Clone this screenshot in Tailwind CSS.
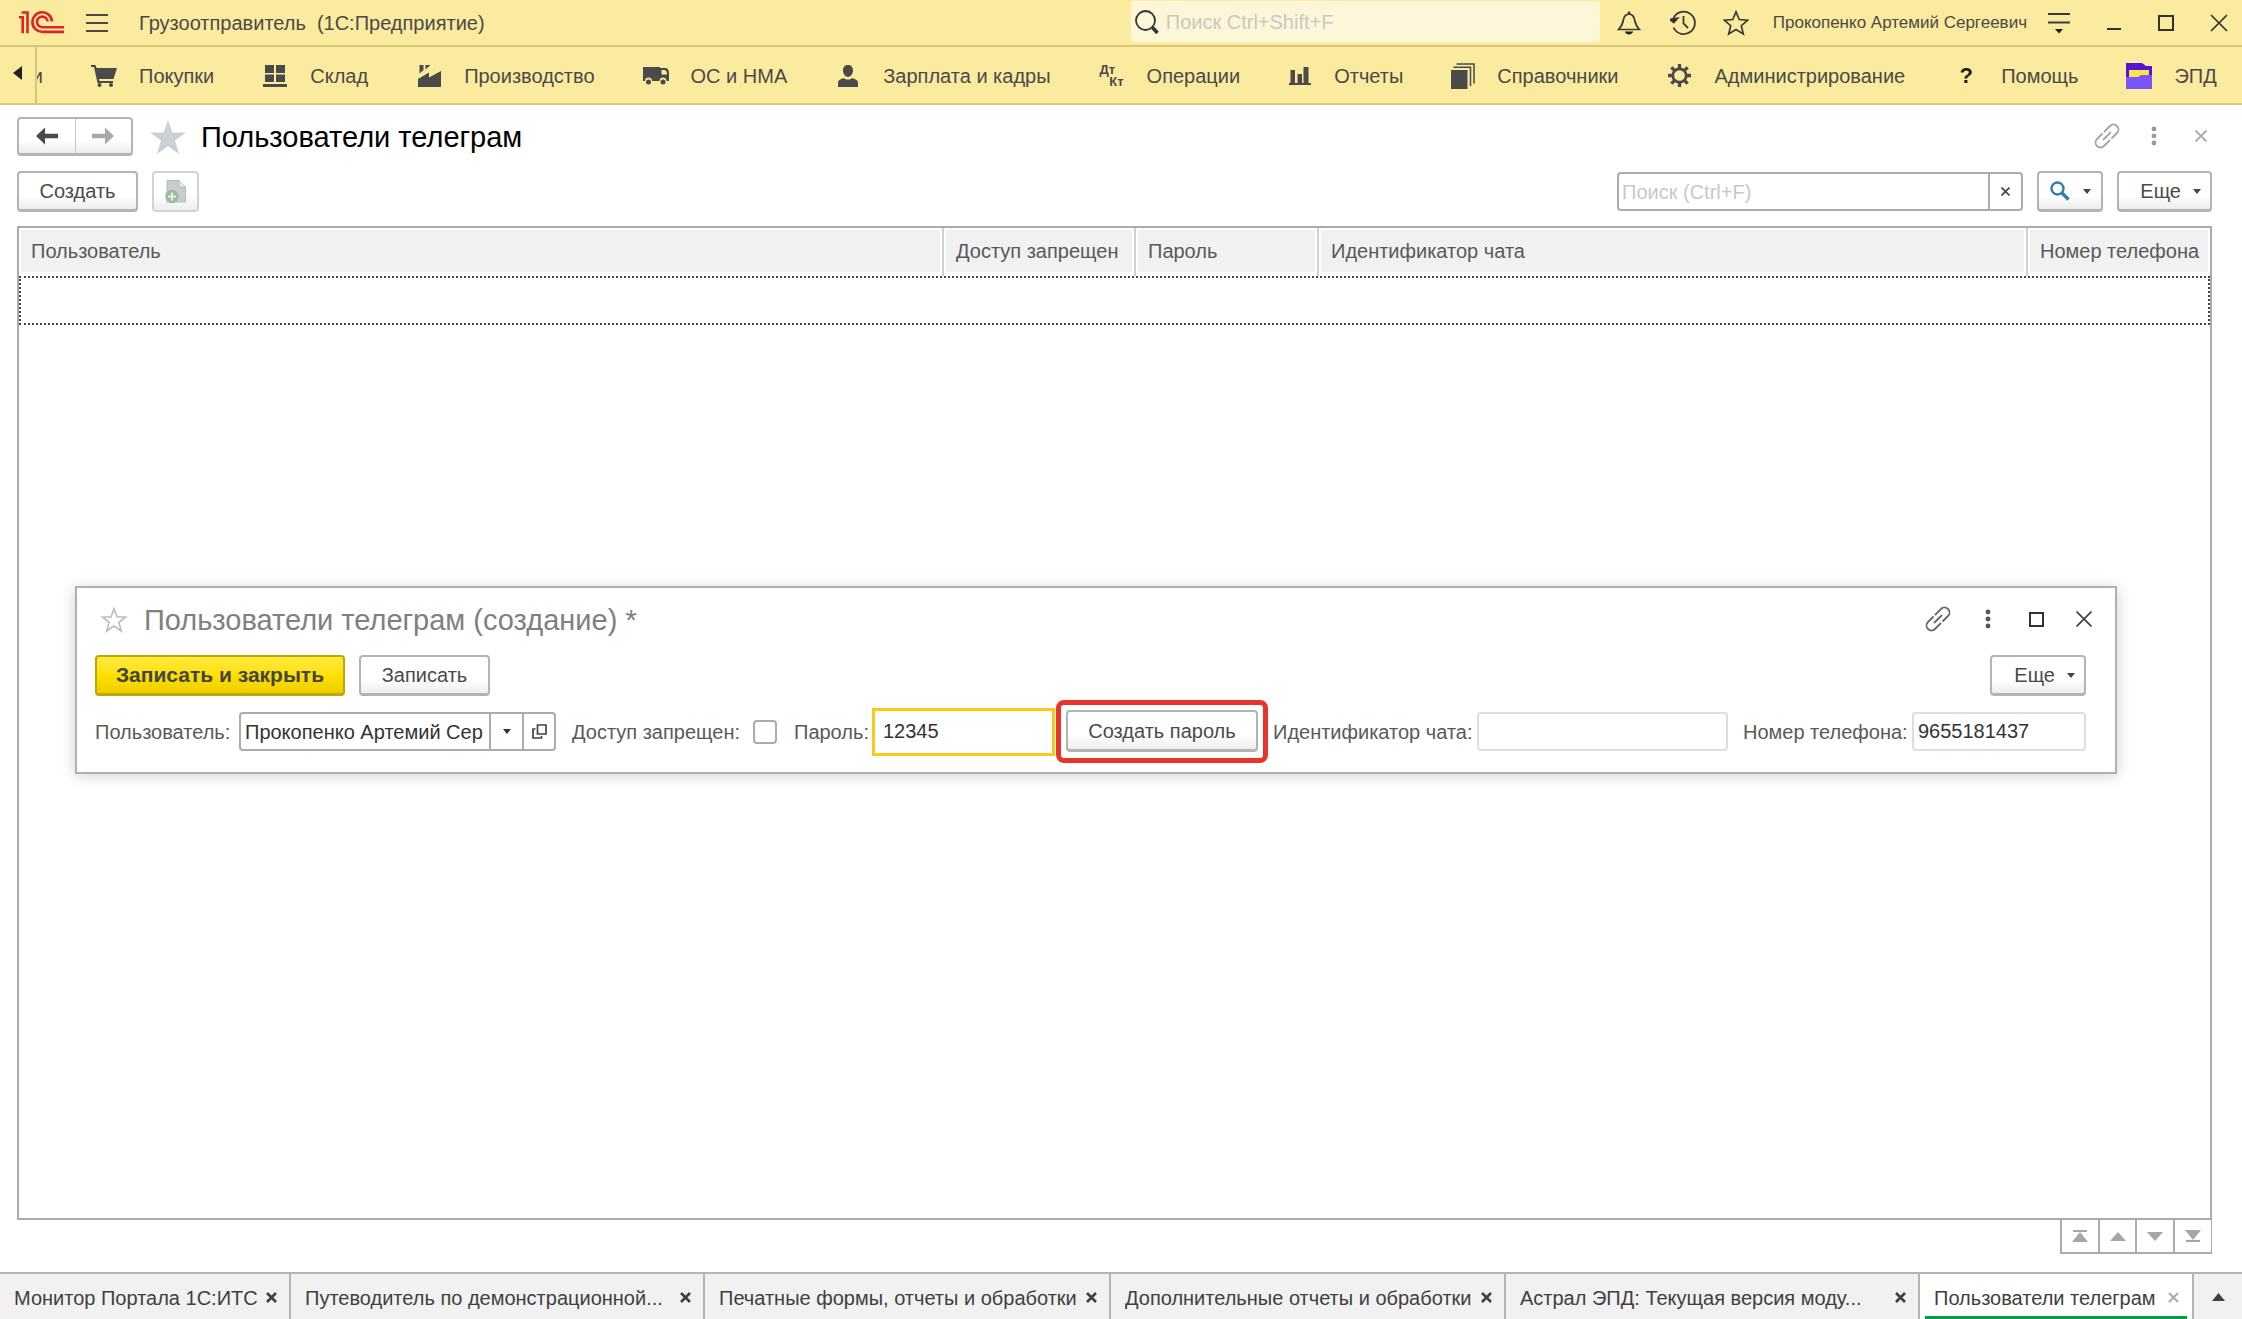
<!DOCTYPE html>
<html lang="ru">
<head>
<meta charset="utf-8">
<meta name="viewport" content="width=device-width, initial-scale=1">
<title>Пользователи телеграм</title>
<script src="https://cdn.jsdelivr.net/npm/@tailwindcss/browser@4"></script>
</head>
<body class="flex min-h-screen flex-col overflow-x-hidden bg-white font-['Liberation_Sans',Arial,sans-serif] text-[20px] leading-6 text-[#4a4a4a]">

<!-- Title bar -->
<header class="flex h-[47px] items-center border-b-2 border-[#d6c77c] bg-[#fbeb9e] pr-[14px] pl-[18px]">
  <svg class="h-[23px] w-[46px] shrink-0" viewBox="0 0 46 23" fill="none" stroke="#de2329" stroke-width="2.6" aria-label="1С">
    <path d="M1 6.200H4.700V22.300M3.600 1.500H9.500V22.300"/>
    <path d="M46 20.900H24.300A9.800 9.800 0 1 1 34 10.500"/>
    <path d="M46 16.200H24.500A5.300 5.300 0 1 1 29.600 10.500"/>
  </svg>
  <button class="ml-[22px] flex h-8 w-[22px] shrink-0 items-center" aria-label="Главное меню">
    <svg class="h-[18px] w-[22px]" viewBox="0 0 22 18" stroke="#4a4a4a" stroke-width="2"><path d="M0 1H22M0 9H22M0 17H22"/></svg>
  </button>
  <h1 class="ml-[31px] flex gap-[11px] whitespace-nowrap"><span>Грузоотправитель</span><span>(1С:Предприятие)</span></h1>
  <label class="mt-px ml-auto flex h-[41px] w-[469px] items-center gap-[7px] self-start rounded-sm bg-[#fef6d8] pl-1">
    <svg class="h-6 w-[24px] shrink-0" viewBox="0 0 24 24" fill="none" stroke="#333"><circle cx="10.5" cy="10.5" r="9.5" stroke-width="1.8"/><path d="M17.5 17.5L22.5 23" stroke-width="3.6"/></svg>
    <input type="text" class="min-w-0 flex-1 bg-transparent outline-none placeholder:text-[#cbc7c3]" placeholder="Поиск Ctrl+Shift+F" aria-label="Глобальный поиск">
  </label>
  <div class="flex shrink-0 items-center">
    <button class="ml-[17px]" aria-label="Уведомления"><svg class="h-6 w-6" viewBox="0 0 24 24" fill="none" stroke="#3a3a3a" stroke-width="1.7"><path d="M1.5 18.5H22.5C19.5 15.5 18.5 14 17.8 9.5C17 5 15.5 3.2 12 3.2S7 5 6.2 9.5C5.5 14 4.500 15.500 1.500 18.500Z"/><path d="M12 0.500V3" stroke-width="2.400"/><path d="M7.800 20.500H16.200C15.500 22.500 14 23.500 12 23.500S8.500 22.500 7.800 20.500Z" fill="#222" stroke="none"/></svg></button>
    <button class="ml-[29px]" aria-label="История"><svg class="h-[26px] w-[26px]" viewBox="0 0 26 26" fill="none" stroke="#3a3a3a" stroke-width="1.8"><path d="M3.200 9A11.200 11.200 0 1 1 3.500 17.500"/><path d="M13.500 6V13.500L18 18"/><path d="M0 9.500L7.500 8.300L3.800 12.500Z" fill="#222"/></svg></button>
    <button class="ml-[27px]" aria-label="Избранное"><svg class="h-[26px] w-[26px]" viewBox="0 0 26 26" fill="none" stroke="#3a3a3a" stroke-width="1.700"><path d="M13 1.800L16.300 9.500L24.700 10.200L18.300 15.700L20.300 24L13 19.600L5.700 24L7.700 15.700L1.300 10.200L9.700 9.500Z"/></svg></button>
    <a href="#" class="ml-6 text-[17px] whitespace-nowrap">Прокопенко Артемий Сергеевич</a>
    <button class="ml-[20px]" aria-label="Настройки"><svg class="h-[22px] w-[24px]" viewBox="0 0 24 22" stroke="#3a3a3a" stroke-width="2"><path d="M1 2H23M1 10.500H23"/><path d="M8 17H16L12 21.500Z" fill="#222" stroke="none"/></svg></button>
    <button class="ml-[35px]" aria-label="Свернуть"><svg class="h-4 w-4" viewBox="0 0 16 16" stroke="#333" stroke-width="2"><path d="M1 14H15"/></svg></button>
    <button class="ml-[36px]" aria-label="Развернуть"><svg class="h-4 w-4" viewBox="0 0 16 16" fill="none" stroke="#333" stroke-width="2"><path d="M1 1H15V15H1Z"/></svg></button>
    <button class="ml-[36px]" aria-label="Закрыть"><svg class="h-[18px] w-[18px]" viewBox="0 0 18 18" stroke="#333" stroke-width="1.700"><path d="M1 1L17 17M17 1L1 17"/></svg></button>
  </div>
</header>

<!-- Sections -->
<nav class="flex h-[58px] items-stretch overflow-hidden border-b-2 border-[#d6c77c] bg-[#fbeb9e] whitespace-nowrap">
  <button class="flex w-[37px] shrink-0 items-center justify-center border-r-2 border-[#d6c77c] pb-1" aria-label="Назад"><svg class="mr-px h-[14px] w-[9px]" viewBox="0 0 9 14" fill="#222"><path d="M9 0V14L0 7Z"/></svg></button>
  <div class="flex w-[6px] shrink-0 items-center justify-end overflow-hidden pt-px"><span>и</span></div>
  <div class="ml-[45px] flex items-center gap-[45px] pt-px">
    <a href="#" class="flex items-center gap-[19px]"><span class="flex w-8 justify-center"><svg class="h-[22px] w-[26px]" viewBox="0 0 26 22" fill="#4a4a4a"><path d="M0 0H4.500L5.500 3H26L22.500 14H8L8.500 16H22V18H6.500L3 2H0Z"/><circle cx="8.500" cy="20" r="2"/><circle cx="20" cy="20" r="2"/></svg></span>Покупки</a>
    <a href="#" class="flex items-center gap-[19px]"><span class="flex w-8 justify-center"><svg class="h-[22px] w-6" viewBox="0 0 24 22" fill="#4a4a4a"><path d="M2 0H11V8H2ZM13 0H22V8H13ZM2 9.500H11V17H2ZM13 9.500H22V17H13ZM0 19H24V22H0Z"/></svg></span>Склад</a>
    <a href="#" class="flex items-center gap-[19px]"><span class="flex w-8 justify-center"><svg class="h-[22px] w-[23px]" viewBox="0 0 23 22" fill="#4a4a4a"><path d="M0 22V14L11 7.500V12.500L23 6V22ZM1.500 0H5.500V5L1.500 8.500ZM7.500 0H12.500L7.500 4.500Z"/></svg></span>Производство</a>
    <a href="#" class="flex items-center gap-[19px]"><span class="flex w-8 justify-center"><svg class="h-[18px] w-[26px]" viewBox="0 0 26 18" fill="#4a4a4a"><path fill-rule="evenodd" d="M0 0H17V1H22Q26 1 26 6V14H23.500A3.500 3.500 0 0 0 16.500 14H9A3.500 3.500 0 0 0 2 14H0ZM18.500 3V7.500H24Q24 3 21 3Z"/><circle cx="5.500" cy="15" r="2.500"/><circle cx="20" cy="15" r="2.500"/></svg></span>ОС и НМА</a>
    <a href="#" class="flex items-center gap-[19px]"><span class="flex w-8 justify-center"><svg class="h-[22px] w-5" viewBox="0 0 20 22" fill="#4a4a4a"><path d="M10 0C13 0 15 2 15 5.500C15 9 12.500 12 10 12S5 9 5 5.500C5 2 7 0 10 0ZM0 22V18C0 15 3 14 6 13C8 15 12 15 14 13C17 14 20 15 20 18V22Z"/></svg></span>Зарплата и кадры</a>
    <a href="#" class="flex items-center gap-[19px]"><span class="flex w-8 justify-center"><span class="flex w-6 flex-col text-[13px] leading-3 font-bold" aria-hidden="true"><span>Дт</span><span class="self-end">Кт</span></span></span>Операции</a>
    <a href="#" class="flex items-center gap-[19px]"><span class="flex w-[30px] justify-center"><svg class="h-[18px] w-[22px]" viewBox="0 0 22 18" fill="#4a4a4a"><path d="M0 16H22V18H0ZM1.500 3H6V16H1.500ZM8.500 7H13V16H8.500ZM14.500 0H19.500V16H14.500Z"/></svg></span>Отчеты</a>
    <a href="#" class="flex items-center gap-[19px]"><span class="flex w-[30px] justify-center"><svg class="h-[26px] w-6" viewBox="0 0 24 26" fill="none" stroke="#4a4a4a" stroke-width="1.500"><path d="M0 7H16.500V26H0Z" fill="#4a4a4a" stroke="none"/><path d="M2.500 4.200H19.500V23M5.500 1H23V20.500"/></svg></span>Справочники</a>
    <a href="#" class="flex items-center gap-[19px]"><span class="flex w-8 justify-center"><svg class="h-[23px] w-[23px]" viewBox="0 0 24 24" fill="none" stroke="#4a4a4a"><circle cx="12" cy="12" r="7" stroke-width="2.800"/><path d="M12 0V4.500M12 19.500V24M0 12H4.500M19.500 12H24M3.500 3.500L6.700 6.700M17.300 17.300L20.500 20.500M3.500 20.500L6.700 17.300M17.300 6.700L20.500 3.500" stroke-width="3.400"/></svg></span>Администрирование</a>
    <a href="#" class="flex items-center gap-[19px]"><span class="flex w-8 justify-center text-[22px] font-bold text-[#222]">?</span>Помощь</a>
    <a href="#" class="flex items-center gap-[19px]"><span class="flex w-8 justify-center"><svg class="h-[26px] w-[26px]" viewBox="0 0 26 26"><path d="M0 0H16L20 3H26V26H0Z" fill="#5414d6"/><path d="M3 7H23V12H16L13 14H3Z" fill="#fbe34a"/><path d="M0 14H12L15.500 12H26V26H0Z" fill="#7a55fb"/></svg></span>ЭПД</a>
  </div>
</nav>

<!-- List form -->
<main class="relative flex flex-1 flex-col pt-3 pr-[30px] pl-[17px]">
  <div class="flex h-[39px] items-center">
    <div class="flex h-[39px] w-[116px] rounded-[4px] border-2 border-b-3 border-[#b4b4b4] bg-linear-to-b from-white from-60% to-[#eeeeee]">
      <button class="flex flex-1 items-center justify-center border-r border-[#c8c8c8]" aria-label="Назад"><svg class="h-5 w-[22px]" viewBox="0 0 22 20" fill="#4a4a4a"><path d="M0 10L9 1.500V7.800H22V12.200H9V18.500Z"/></svg></button>
      <button class="flex flex-1 items-center justify-center" aria-label="Вперед"><svg class="h-5 w-[22px]" viewBox="0 0 22 20" fill="#a9a9a9"><path d="M22 10L13 1.500V7.800H0V12.200H13V18.500Z"/></svg></button>
    </div>
    <button class="ml-[17px]" aria-label="В избранное"><svg class="h-[34px] w-9" viewBox="0 0 36 34" fill="#cdd0d2"><path d="M18 0L22.300 12.600H36L25 20.600L29 34L18 26L7 34L11 20.600L0 12.600H13.700Z"/></svg></button>
    <h2 class="ml-[15px] text-[29px] leading-9 text-black">Пользователи телеграм</h2>
    <div class="ml-auto flex items-center pb-0.5">
      <button aria-label="Ссылка"><svg class="h-[26px] w-[26px]" viewBox="0 0 26 26" fill="none" stroke="#a5a5a5" stroke-width="1.800" stroke-linecap="round"><path d="M10.500 8.500L16 3C18 1 21 1 23 3S25 8 23 10L18 15M15.500 17.500L10 23C8 25 5 25 3 23S1 18 3 16L8 11M9.500 16.500L16.500 9.500"/></svg></button>
      <button class="ml-[31px]" aria-label="Еще"><svg class="h-5 w-[6px]" viewBox="0 0 6 20" fill="#9a9a9a"><circle cx="3" cy="3" r="2.400"/><circle cx="3" cy="10" r="2.400"/><circle cx="3" cy="17" r="2.400"/></svg></button>
      <button class="mr-[5px] ml-[38px]" aria-label="Закрыть"><svg class="h-3 w-3" viewBox="0 0 12 12" stroke="#a5a5a5" stroke-width="1.700"><path d="M.5.500L11.500 11.500M11.500.500L.5 11.500"/></svg></button>
    </div>
  </div>

  <div class="mt-[15px] flex h-[41px] items-center">
    <button class="h-[41px] w-[121px] rounded-[4px] border-2 border-b-3 border-[#b4b4b4] bg-linear-to-b from-white from-60% to-[#eeeeee]">Создать</button>
    <button class="ml-[14px] flex h-[41px] w-[47px] items-center justify-center rounded-[4px] border-2 border-[#d2d2d2] bg-linear-to-b from-white from-60% to-[#eeeeee]" aria-label="Создать копированием"><svg class="h-6 w-[22px]" viewBox="0 0 22 24"><path d="M2 0.500H14L20.500 7V22H2Z" fill="#c9cdd1" stroke="#b4bac0"/><path d="M14 .5V7H20.500" fill="#e8eaec" stroke="#b4bac0"/><circle cx="7" cy="16.500" r="6.800" fill="#9dbb9d"/><path d="M7 12.500V20.500M3 16.500H11" stroke="#e6efe6" stroke-width="2"/></svg></button>
    <div class="ml-auto flex h-[39px] w-[406px] rounded-[4px] border-2 border-[#ababab] bg-white">
      <input type="text" class="min-w-0 flex-1 pl-[3px] outline-none placeholder:text-[#c8c8c8]" placeholder="Поиск (Ctrl+F)" aria-label="Поиск в списке">
      <button class="flex w-[33px] items-center justify-center border-l-2 border-[#ababab]" aria-label="Очистить"><svg class="h-[9px] w-[9px]" viewBox="0 0 9 9" stroke="#444" stroke-width="1.600"><path d="M.5.500L8.500 8.500M8.500.500L.5 8.500"/></svg></button>
    </div>
    <button class="ml-[14px] flex h-[41px] w-[66px] items-center justify-center gap-[13px] rounded-[4px] border-2 border-b-3 border-[#b4b4b4] bg-linear-to-b from-white from-60% to-[#eeeeee]" aria-label="Найти"><svg class="h-5 w-5" viewBox="0 0 20 20" fill="none" stroke="#2f7cb0"><circle cx="7.500" cy="7.500" r="6" stroke-width="2.400"/><path d="M12 12L18.500 18.500" stroke-width="3.400"/></svg><svg class="h-[5px] w-2" viewBox="0 0 8 5" fill="#444"><path d="M0 0H8L4 5Z"/></svg></button>
    <button class="ml-[14px] flex h-[41px] w-[95px] items-center justify-end gap-[12px] rounded-[4px] border-2 border-b-3 border-[#b4b4b4] bg-linear-to-b from-white from-60% to-[#eeeeee] pr-[9px]">Еще<svg class="h-[5px] w-2" viewBox="0 0 8 5" fill="#444"><path d="M0 0H8L4 5Z"/></svg></button>
  </div>

  <div class="mt-[14px] flex-1 border-2 border-[#ababab]">
    <table class="w-full table-fixed border-collapse text-left">
      <colgroup><col><col class="w-[192px]"><col class="w-[183px]"><col class="w-[709px]"><col class="w-[183px]"></colgroup>
      <thead>
        <tr class="whitespace-nowrap text-[#595959]">
          <th class="border-r-2 border-[#d0d0d0] p-0.5 pb-1 font-normal"><div class="bg-[#f1f1f1] py-[9px] pl-[10px]">Пользователь</div></th>
          <th class="border-r-2 border-[#d0d0d0] p-0.5 pb-1 font-normal"><div class="bg-[#f1f1f1] py-[9px] pl-[10px]">Доступ запрещен</div></th>
          <th class="border-r-2 border-[#d0d0d0] p-0.5 pb-1 font-normal"><div class="bg-[#f1f1f1] py-[9px] pl-[10px]">Пароль</div></th>
          <th class="border-r-2 border-[#d0d0d0] p-0.5 pb-1 font-normal"><div class="bg-[#f1f1f1] py-[9px] pl-[10px]">Идентификатор чата</div></th>
          <th class="p-0.5 pb-1 font-normal"><div class="bg-[#f1f1f1] py-[9px] pl-[10px]">Номер телефона</div></th>
        </tr>
      </thead>
      <tbody>
        <tr class="h-[49px] outline-2 -outline-offset-2 outline-dotted outline-[#444]"><td></td><td></td><td></td><td></td><td></td></tr>
      </tbody>
    </table>
  </div>
  <div class="mb-[18px] flex self-end border-x border-b-2 border-[#ababab]">
    <button class="flex h-8 w-[38px] items-center justify-center border-x border-[#ababab]" aria-label="В начало"><svg class="h-3 w-4" viewBox="0 0 16 12" fill="#a6a6a6"><path d="M1 0H15V2H1ZM8 2L16 12H0Z"/></svg></button>
    <button class="flex h-8 w-[37px] items-center justify-center border-x border-[#ababab]" aria-label="Вверх"><svg class="h-[9px] w-4" viewBox="0 0 16 9" fill="#a6a6a6"><path d="M8 0L16 9H0Z"/></svg></button>
    <button class="flex h-8 w-[38px] items-center justify-center border-x border-[#ababab]" aria-label="Вниз"><svg class="h-[9px] w-4" viewBox="0 0 16 9" fill="#a6a6a6"><path d="M8 9L16 0H0Z"/></svg></button>
    <button class="flex h-8 w-[37px] items-center justify-center border-l border-[#ababab]" aria-label="В конец"><svg class="h-3 w-4" viewBox="0 0 16 12" fill="#a6a6a6"><path d="M1 12H15V10H1ZM8 10L16 0H0Z"/></svg></button>
  </div>

  <!-- Creation dialog -->
  <section role="dialog" aria-labelledby="dlg" class="absolute top-[481px] right-[125px] left-[75px] border-2 border-[#b0b0b0] bg-white pt-[14px] pr-[29px] pb-[9px] pl-[18px] shadow-[0_2px_14px_rgba(0,0,0,0.18)]">
    <div class="flex h-9 items-center">
      <button class="ml-[6px]" aria-label="В избранное"><svg class="h-[26px] w-[26px]" viewBox="0 0 26 26" fill="none" stroke="#b9bdc2" stroke-width="1.700"><path d="M13 1.800L16 10H24.700L17.800 15.400L20.300 24L13 19L5.700 24L8.200 15.400L1.300 10H10Z"/></svg></button>
      <h3 id="dlg" class="ml-[17px] text-[29px] leading-9 whitespace-nowrap text-[#808080]">Пользователи телеграм (создание) *</h3>
      <div class="-mr-[6px] ml-auto flex items-center pb-0.5">
        <button aria-label="Ссылка"><svg class="h-[26px] w-[26px]" viewBox="0 0 26 26" fill="none" stroke="#6a6a6a" stroke-width="1.800" stroke-linecap="round"><path d="M10.500 8.500L16 3C18 1 21 1 23 3S25 8 23 10L18 15M15.500 17.500L10 23C8 25 5 25 3 23S1 18 3 16L8 11M9.500 16.500L16.500 9.500"/></svg></button>
        <button class="ml-[34px]" aria-label="Еще"><svg class="h-5 w-[6px]" viewBox="0 0 6 20" fill="#555"><circle cx="3" cy="3" r="2.400"/><circle cx="3" cy="10" r="2.400"/><circle cx="3" cy="17" r="2.400"/></svg></button>
        <button class="ml-[38px]" aria-label="Развернуть"><svg class="h-[15px] w-[15px]" viewBox="0 0 15 15" fill="none" stroke="#333" stroke-width="2"><path d="M1 1H14V14H1Z"/></svg></button>
        <button class="ml-[32px]" aria-label="Закрыть"><svg class="h-4 w-4" viewBox="0 0 16 16" stroke="#444" stroke-width="1.700"><path d="M.5.500L15.500 15.500M15.500.500L.5 15.500"/></svg></button>
      </div>
    </div>
    <div class="mt-[17px] flex">
      <button class="h-[41px] w-[250px] rounded-[4px] border-2 border-b-3 border-[#c0a800] bg-linear-to-b from-[#ffe93a] via-[#ffe000] to-[#ecce00] text-[21px] font-bold text-[#444]">Записать и закрыть</button>
      <button class="ml-[14px] h-[41px] w-[131px] rounded-[4px] border-2 border-b-3 border-[#b4b4b4] bg-linear-to-b from-white from-60% to-[#eeeeee]">Записать</button>
      <button class="ml-auto flex h-[41px] w-[96px] items-center justify-end gap-[12px] rounded-[4px] border-2 border-b-3 border-[#b4b4b4] bg-linear-to-b from-white from-60% to-[#eeeeee] pr-[9px]">Еще<svg class="h-[5px] w-2" viewBox="0 0 8 5" fill="#444"><path d="M0 0H8L4 5Z"/></svg></button>
    </div>
    <div class="mt-1 flex h-[63px] items-center whitespace-nowrap text-[#595959]">
      <label for="user" class="w-36 shrink-0">Пользователь:</label>
      <div class="flex h-[39px] w-[317px] shrink-0 rounded-[4px] border-2 border-[#ababab]">
        <input id="user" type="text" class="mr-[6px] ml-1 min-w-0 flex-1 text-[#333] outline-none" value="Прокопенко Артемий Сергеевич">
        <button class="flex w-[33px] items-center justify-center border-l-2 border-[#ababab]" aria-label="Выбрать"><svg class="h-[5px] w-2" viewBox="0 0 8 5" fill="#333"><path d="M0 0H8L4 5Z"/></svg></button>
        <button class="flex w-[32px] items-center justify-center border-l-2 border-[#ababab]" aria-label="Открыть"><svg class="h-[15px] w-[15px]" viewBox="0 0 15 15" fill="none" stroke="#444" stroke-width="1.700"><path d="M5.500 1H14V10H5.500ZM3.500 5H1V14H9.500V12"/></svg></button>
      </div>
      <label for="deny" class="ml-4 w-[181px] shrink-0">Доступ запрещен:</label>
      <input id="deny" type="checkbox" class="h-6 w-6 shrink-0 appearance-none rounded-[4px] border-2 border-[#ababab] bg-white">
      <label for="pwd" class="ml-[17px] w-[78px] shrink-0">Пароль:</label>
      <input id="pwd" type="text" class="h-12 w-[183px] shrink-0 border-3 border-[#fcc916] pl-2 text-[#333] outline-none" value="12345">
      <div class="ml-px h-[63px] w-[212px] shrink-0 rounded-[8px] border-5 border-[#e8352c] p-[5px]"><button class="h-[42px] w-full rounded-[4px] border-2 border-b-3 border-[#b4b4b4] bg-linear-to-b from-white from-60% to-[#eeeeee] text-[#4a4a4a]">Создать пароль</button></div>
      <label for="chat" class="ml-[5px] w-[204px] shrink-0">Идентификатор чата:</label>
      <input id="chat" type="text" class="h-[39px] min-w-0 flex-1 rounded-[4px] border-2 border-[#dedede] pl-1 outline-none">
      <label for="phone" class="ml-[15px] w-[169px] shrink-0">Номер телефона:</label>
      <input id="phone" type="text" class="h-[39px] w-[174px] shrink-0 rounded-[4px] border-2 border-[#dedede] pl-1 text-[#333] outline-none" value="9655181437">
    </div>
  </section>
</main>

<!-- Open windows -->
<footer class="flex h-[47px] border-t-2 border-[#b4b4b4] bg-[#f1f1f1] whitespace-nowrap text-[#404040]">
  <div class="flex w-[291px] items-center justify-between border-r-2 border-[#b4b4b4] pt-0.5 pr-3 pl-[14px]"><a href="#" class="truncate">Монитор Портала 1С:ИТС</a><button aria-label="Закрыть"><svg class="h-[11px] w-[11px]" viewBox="0 0 11 11" stroke="#404040" stroke-width="2.600"><path d="M1 1L10 10M10 1L1 10"/></svg></button></div>
  <div class="flex w-[414px] items-center justify-between border-r-2 border-[#b4b4b4] pt-0.5 pr-3 pl-[14px]"><a href="#" class="truncate">Путеводитель по демонстрационной...</a><button aria-label="Закрыть"><svg class="h-[11px] w-[11px]" viewBox="0 0 11 11" stroke="#404040" stroke-width="2.600"><path d="M1 1L10 10M10 1L1 10"/></svg></button></div>
  <div class="flex w-[406px] items-center justify-between border-r-2 border-[#b4b4b4] pt-0.5 pr-3 pl-[14px]"><a href="#" class="truncate">Печатные формы, отчеты и обработки</a><button aria-label="Закрыть"><svg class="h-[11px] w-[11px]" viewBox="0 0 11 11" stroke="#404040" stroke-width="2.600"><path d="M1 1L10 10M10 1L1 10"/></svg></button></div>
  <div class="flex w-[395px] items-center justify-between border-r-2 border-[#b4b4b4] pt-0.5 pr-3 pl-[14px]"><a href="#" class="truncate">Дополнительные отчеты и обработки</a><button aria-label="Закрыть"><svg class="h-[11px] w-[11px]" viewBox="0 0 11 11" stroke="#404040" stroke-width="2.600"><path d="M1 1L10 10M10 1L1 10"/></svg></button></div>
  <div class="flex w-[414px] items-center justify-between border-r-2 border-[#b4b4b4] pt-0.5 pr-3 pl-[14px]"><a href="#" class="truncate">Астрал ЭПД: Текущая версия моду...</a><button aria-label="Закрыть"><svg class="h-[11px] w-[11px]" viewBox="0 0 11 11" stroke="#404040" stroke-width="2.600"><path d="M1 1L10 10M10 1L1 10"/></svg></button></div>
  <div class="flex w-[274px] items-stretch border-r-2 border-[#b4b4b4] bg-white px-[5px]"><div class="flex flex-1 items-center justify-between border-b-3 border-[#0d9a48] pt-[5px] pr-2 pl-[9px]"><a href="#">Пользователи телеграм</a><button aria-label="Закрыть"><svg class="h-[11px] w-[11px]" viewBox="0 0 11 11" stroke="#adadad" stroke-width="2.200"><path d="M1 1L10 10M10 1L1 10"/></svg></button></div></div>
  <button class="flex flex-1 items-center justify-center" aria-label="Показать все"><svg class="h-2 w-[13px]" viewBox="0 0 13 8" fill="#404040"><path d="M6.500 0L13 8H0Z"/></svg></button>
</footer>
</body>
</html>
